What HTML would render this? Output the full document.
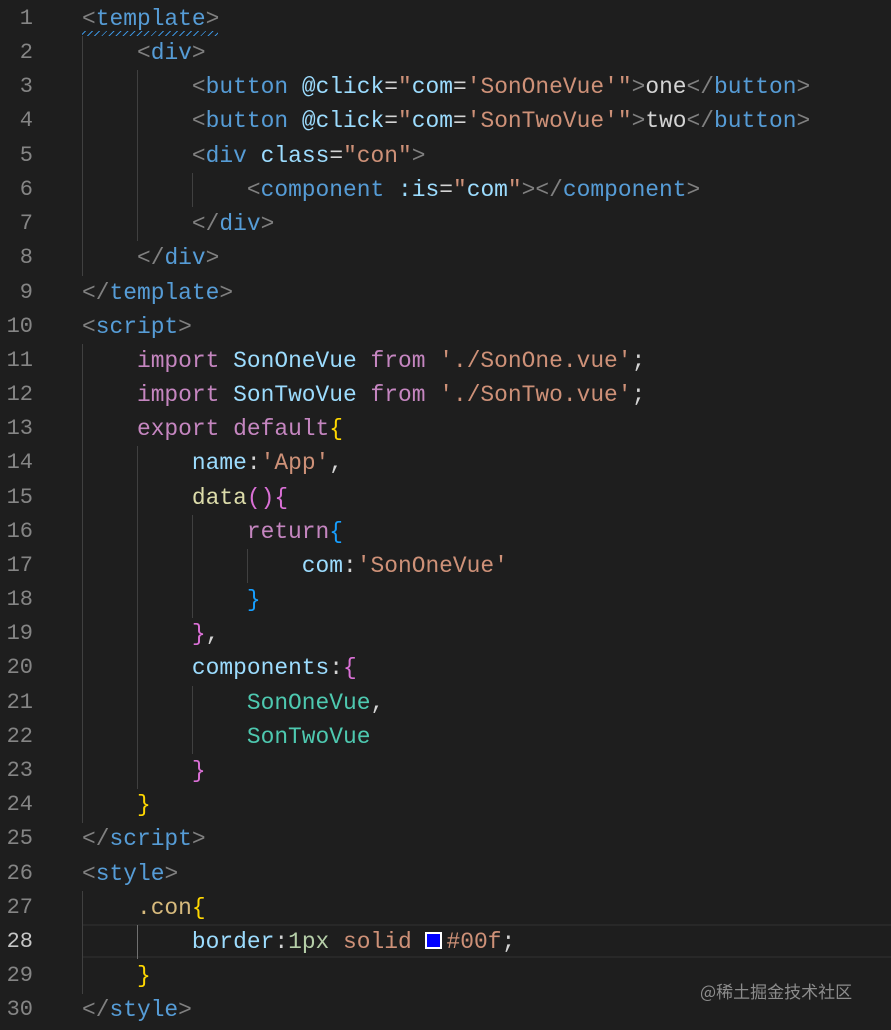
<!DOCTYPE html>
<html><head><meta charset="utf-8"><style>
body{margin:0;background:#1e1e1e;width:891px;height:1030px;overflow:hidden;position:relative;font-family:"Liberation Mono",monospace;font-size:22.9px}
.l{position:absolute;left:82px;height:34px;line-height:34px;white-space:pre;color:#d4d4d4}
.n{position:absolute;left:0;width:33px;text-align:right;height:34px;line-height:34px;color:#858585;font-size:22px}
.g{position:absolute;width:1px;background:#404040}
.p{color:#808080}.t{color:#569cd6}.a{color:#9cdcfe}.s{color:#ce9178}.k{color:#c586c0}.c{color:#4ec9b0}.y{color:#ffd700}.m{color:#da70d6}.b{color:#179fff}.f{color:#dcdcaa}.w{color:#d7ba7d}
.hl{position:absolute;left:82px;right:0;top:924px;height:34px;border-top:2px solid #282828;border-bottom:2px solid #282828;box-sizing:border-box}
.wm{position:absolute;left:700px;top:978px;font-family:"Noto Sans CJK SC",sans-serif;font-size:17px;color:#8c8c8c}
.sq{display:inline-block;width:17px;height:17px;background:#00f;border:2px solid #fff;box-sizing:border-box;vertical-align:-1px;margin-right:4px}
</style></head><body>
<div class="hl"></div>
<div class="g" style="left:82px;top:36px;height:240px"></div>
<div class="g" style="left:82px;top:344px;height:479px"></div>
<div class="g" style="left:82px;top:891px;height:103px"></div>
<div class="g" style="left:137px;top:70px;height:171px"></div>
<div class="g" style="left:137px;top:446px;height:343px"></div>
<div class="g" style="left:137px;top:925px;height:34px;background:#707070"></div>
<div class="g" style="left:192px;top:173px;height:34px"></div>
<div class="g" style="left:192px;top:515px;height:103px"></div>
<div class="g" style="left:192px;top:686px;height:68px"></div>
<div class="g" style="left:247px;top:549px;height:34px"></div>
<div style="position:absolute;left:82px;top:31px;width:136px;height:5px;background:repeating-linear-gradient(135deg,transparent 0 2px,#3a8fd8 2px 3px,transparent 3px 5px)"></div>

<div class="n" style="top:2px">1</div><div class="l" style="top:2px"><span class="p">&lt;</span><span class="t">template</span><span class="p">&gt;</span></div>
<div class="n" style="top:36px">2</div><div class="l" style="top:36px">    <span class="p">&lt;</span><span class="t">div</span><span class="p">&gt;</span></div>
<div class="n" style="top:70px">3</div><div class="l" style="top:70px">        <span class="p">&lt;</span><span class="t">button</span> <span class="a">@click</span>=<span class="s">"</span><span class="a">com</span>=<span class="s">'SonOneVue'</span><span class="s">"</span><span class="p">&gt;</span>one<span class="p">&lt;/</span><span class="t">button</span><span class="p">&gt;</span></div>
<div class="n" style="top:104px">4</div><div class="l" style="top:104px">        <span class="p">&lt;</span><span class="t">button</span> <span class="a">@click</span>=<span class="s">"</span><span class="a">com</span>=<span class="s">'SonTwoVue'</span><span class="s">"</span><span class="p">&gt;</span>two<span class="p">&lt;/</span><span class="t">button</span><span class="p">&gt;</span></div>
<div class="n" style="top:139px">5</div><div class="l" style="top:139px">        <span class="p">&lt;</span><span class="t">div</span> <span class="a">class</span>=<span class="s">"con"</span><span class="p">&gt;</span></div>
<div class="n" style="top:173px">6</div><div class="l" style="top:173px">            <span class="p">&lt;</span><span class="t">component</span> <span class="a">:is</span>=<span class="s">"</span><span class="a">com</span><span class="s">"</span><span class="p">&gt;&lt;/</span><span class="t">component</span><span class="p">&gt;</span></div>
<div class="n" style="top:207px">7</div><div class="l" style="top:207px">        <span class="p">&lt;/</span><span class="t">div</span><span class="p">&gt;</span></div>
<div class="n" style="top:241px">8</div><div class="l" style="top:241px">    <span class="p">&lt;/</span><span class="t">div</span><span class="p">&gt;</span></div>
<div class="n" style="top:276px">9</div><div class="l" style="top:276px"><span class="p">&lt;/</span><span class="t">template</span><span class="p">&gt;</span></div>
<div class="n" style="top:310px">10</div><div class="l" style="top:310px"><span class="p">&lt;</span><span class="t">script</span><span class="p">&gt;</span></div>
<div class="n" style="top:344px">11</div><div class="l" style="top:344px">    <span class="k">import</span> <span class="a">SonOneVue</span> <span class="k">from</span> <span class="s">'./SonOne.vue'</span>;</div>
<div class="n" style="top:378px">12</div><div class="l" style="top:378px">    <span class="k">import</span> <span class="a">SonTwoVue</span> <span class="k">from</span> <span class="s">'./SonTwo.vue'</span>;</div>
<div class="n" style="top:412px">13</div><div class="l" style="top:412px">    <span class="k">export</span> <span class="k">default</span><span class="y">{</span></div>
<div class="n" style="top:446px">14</div><div class="l" style="top:446px">        <span class="a">name</span>:<span class="s">'App'</span>,</div>
<div class="n" style="top:481px">15</div><div class="l" style="top:481px">        <span class="f">data</span><span class="m">(){</span></div>
<div class="n" style="top:515px">16</div><div class="l" style="top:515px">            <span class="k">return</span><span class="b">{</span></div>
<div class="n" style="top:549px">17</div><div class="l" style="top:549px">                <span class="a">com</span>:<span class="s">'SonOneVue'</span></div>
<div class="n" style="top:583px">18</div><div class="l" style="top:583px">            <span class="b">}</span></div>
<div class="n" style="top:617px">19</div><div class="l" style="top:617px">        <span class="m">}</span>,</div>
<div class="n" style="top:651px">20</div><div class="l" style="top:651px">        <span class="a">components</span>:<span class="m">{</span></div>
<div class="n" style="top:686px">21</div><div class="l" style="top:686px">            <span class="c">SonOneVue</span>,</div>
<div class="n" style="top:720px">22</div><div class="l" style="top:720px">            <span class="c">SonTwoVue</span></div>
<div class="n" style="top:754px">23</div><div class="l" style="top:754px">        <span class="m">}</span></div>
<div class="n" style="top:788px">24</div><div class="l" style="top:788px">    <span class="y">}</span></div>
<div class="n" style="top:822px">25</div><div class="l" style="top:822px"><span class="p">&lt;/</span><span class="t">script</span><span class="p">&gt;</span></div>
<div class="n" style="top:857px">26</div><div class="l" style="top:857px"><span class="p">&lt;</span><span class="t">style</span><span class="p">&gt;</span></div>
<div class="n" style="top:891px">27</div><div class="l" style="top:891px">    <span class="w">.con</span><span class="y">{</span></div>
<div class="n" style="top:925px;color:#c6c6c6">28</div><div class="l" style="top:925px">        <span class="a">border</span>:<span style="color:#b5cea8">1px</span> <span class="s">solid</span> <span class="sq"></span><span class="s">#00f</span>;</div>
<div class="n" style="top:959px">29</div><div class="l" style="top:959px">    <span class="y">}</span></div>
<div class="n" style="top:993px">30</div><div class="l" style="top:993px"><span class="p">&lt;/</span><span class="t">style</span><span class="p">&gt;</span></div>
<div class="wm">@稀土掘金技术社区</div>
</body></html>
